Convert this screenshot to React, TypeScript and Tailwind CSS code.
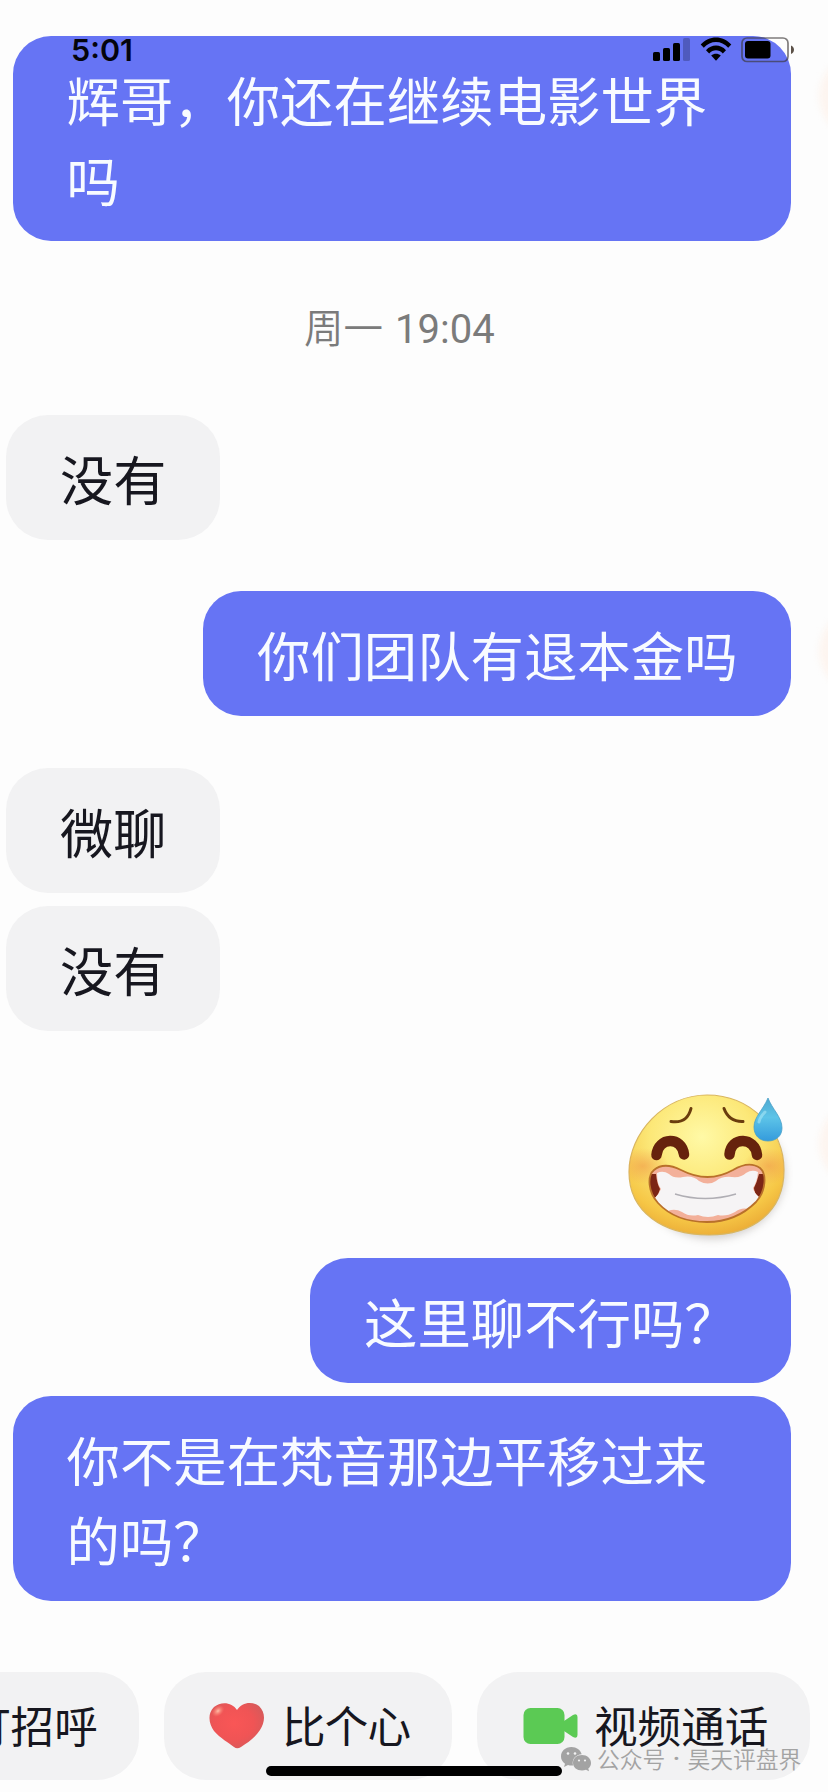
import React from "react";

const FONT = "font-['Noto_Sans_CJK_SC',sans-serif]";

function Sent({ className, children }: { className: string; children: React.ReactNode }) {
  return (
    <div className={`ml-auto mr-[37px] rounded-[38px] bg-[#6674f4] pl-[54px] pt-[22.5px] pb-[22px] text-[53.4px] leading-[80px] font-normal whitespace-nowrap text-[#f8fbff] ${className}`}>
      {children}
    </div>
  );
}

function Received({ className, children }: { className: string; children: React.ReactNode }) {
  return (
    <div className={`ml-[6px] w-[214px] rounded-[42px] bg-[#f2f2f3] pl-[54px] pt-[23px] pb-[22px] text-[53.2px] leading-[80px] font-normal whitespace-nowrap text-[#17171f] ${className}`}>
      {children}
    </div>
  );
}

function AvatarEdge({ className }: { className: string }) {
  return <div className={`absolute left-[819px] h-[84px] w-[84px] rounded-full bg-[#fdf5f0] blur-[3px] ${className}`} />;
}

function SignalIcon() {
  return (
    <svg width="38" height="25" viewBox="0 0 38 25">
      <rect x="0" y="15" width="7" height="9" rx="1.6" />
      <rect x="10" y="11" width="7" height="13" rx="1.6" />
      <rect x="20" y="6" width="7" height="18" rx="1.6" />
      <rect x="30" y="1" width="7" height="23" rx="1.6" opacity=".22" />
    </svg>
  );
}

function WifiIcon() {
  return (
    <svg width="32" height="24" viewBox="0 0 32 24">
      <path d="M.7 7.6C9-2 23-2 31.3 7.6L28.2 10.8C21.5 3.2 10.5 3.2 3.8 10.8Z" />
      <path d="M6 13.2C11.6 7 20.4 7 26 13.2L22.8 16.4C19 12.2 13 12.2 9.2 16.4Z" />
      <path d="M11.2 18.6C14 16 18 16 20.8 18.6L16 23.8Z" />
    </svg>
  );
}

function BatteryIcon() {
  return (
    <svg width="54" height="26" viewBox="0 0 54 26">
      <rect x="1" y="1" width="46" height="23.5" rx="5" fill="none" stroke="#3c3838" strokeOpacity=".65" strokeWidth="1.7" />
      <rect x="4" y="4" width="25.5" height="17.5" rx="3" />
      <path d="M50 8.500C54 10 54 15.500 50 17Z" fill="#5c5148" />
    </svg>
  );
}

const FACE = "M86 5C130 5 163 40 163 80C163 122 132 145 88 145C42 145 8 122 8 82C8 43 43 5 86 5Z";
const MOUTH = "M33 34C40 28 50 29 60 34Q87 48 112 34C122 28 132 27 139 32C146 38 145 55 135 66C121 80 106 86 86 86C66 86 49 80 37 67C27 56 26 40 33 34Z";

function GrinSweat() {
  return (
    <svg className="mt-[59px] ml-[621px] block" width="172" height="158" viewBox="0 0 172 158">
      <defs>
        <radialGradient id="face" cx=".47" cy=".3" r=".74">
          <stop offset="0" stopColor="#fff9a6" />
          <stop offset=".45" stopColor="#fce878" />
          <stop offset=".8" stopColor="#f6c746" />
          <stop offset="1" stopColor="#eaa834" />
        </radialGradient>
        <linearGradient id="drop" x1="0" y1="0" x2="0" y2="1">
          <stop offset="0" stopColor="#4fa9d0" />
          <stop offset=".45" stopColor="#5dc4e8" />
          <stop offset="1" stopColor="#349bdc" />
        </linearGradient>
        <radialGradient id="cheek">
          <stop offset="0" stopColor="#f09a4a" stopOpacity=".6" />
          <stop offset="1" stopColor="#f09a4a" stopOpacity="0" />
        </radialGradient>
        <clipPath id="head"><path d={FACE} /></clipPath>
        <clipPath id="mouth"><path d={MOUTH} /></clipPath>
        <filter id="soft" x="-20%" y="-20%" width="140%" height="140%">
          <feGaussianBlur stdDeviation="4" />
        </filter>
        <filter id="blend">
          <feGaussianBlur stdDeviation=".6" />
        </filter>
      </defs>
      <ellipse cx="91" cy="84" rx="73" ry="65" fill="#8c8480" opacity=".38" filter="url(#soft)" />
      <path d={FACE} fill="url(#face)" stroke="#d9b660" strokeWidth="1.2" />
      <g clipPath="url(#head)">
        <ellipse cx="22" cy="76" rx="26" ry="18" fill="url(#cheek)" />
        <ellipse cx="148" cy="76" rx="26" ry="18" fill="url(#cheek)" />
      </g>
      <g filter="url(#blend)">
        <path d="M50 31.500Q66 34 70 18.500M103 18.500Q108 32 122 31.500" fill="none" stroke="#6b3c11" strokeWidth="3" strokeLinecap="round" />
        <path d="M35.500 65C37 47 61 46 63 64.500M108.500 64.500C110 46 134 47 136 65" fill="none" stroke="#662408" strokeWidth="10.500" strokeLinecap="round" />
        <g transform="translate(0 46)">
          <g clipPath="url(#mouth)">
            <rect x="20" y="24" width="130" height="70" fill="#f3b09a" />
            <path d="M20 38H35Q36 48 39 53Q38 58 34 62L36 68H20ZM150 38H138Q136 46 133 52Q133 57 138 61L136 66H150Z" fill="#7b2513" />
            <path d="M36 37Q42 34 48 38Q53 43 62 41Q72 39 78 45Q87 50 95 45Q101 40 111 41Q120 42 125 37Q131 33 137 36Q136 46 132 52Q133 57 138 61Q134 69 128 73Q120 71 114 76Q105 81 97 79Q87 83 77 79Q68 81 61 76Q54 72 47 75Q39 71 34 62Q38 58 40 53Q36 48 36 37Z" fill="#f6f4f5" />
            <path d="M54 58Q84 67 115 58" fill="none" stroke="#b0aeb4" strokeWidth="1.4" />
          </g>
          <path d={MOUTH} fill="none" stroke="#b9702a" strokeWidth="1.8" />
        </g>
      </g>
      <path d="M147 8C151 19 161 27 161 38C161 46 155 51 147 51C138 51 133 45 133 37C133 27 142 20 147 8Z" fill="url(#drop)" stroke="#4aa0c8" strokeWidth=".8" />
      <path d="M138 32Q139 27 144 22" fill="none" stroke="#b5eefa" strokeWidth="3" strokeLinecap="round" opacity=".5" />
    </svg>
  );
}

function HeartIcon() {
  return (
    <svg width="56" height="48" viewBox="0 0 56 48">
      <defs>
        <radialGradient id="heart" cx=".45" cy=".45" r=".6">
          <stop offset="0" stopColor="#f95656" />
          <stop offset=".6" stopColor="#f05455" />
          <stop offset="1" stopColor="#d65a5a" />
        </radialGradient>
        <radialGradient id="shine">
          <stop offset="0" stopColor="#ffc0a8" />
          <stop offset="1" stopColor="#ff8070" stopOpacity="0" />
        </radialGradient>
      </defs>
      <path d="M28 8C23 0 12-1 5 5C-2 12 0 22 5 29C11 36 20 41 25 45Q28 47.500 32 45C38 41 46 36 51 28C56 20 57 11 50 4C43-1 33 0 28 8Z" fill="url(#heart)" />
      <ellipse cx="9" cy="9" rx="7" ry="5" transform="rotate(-40 9 9)" fill="url(#shine)" />
    </svg>
  );
}

function VideoIcon() {
  return (
    <svg width="56" height="38" viewBox="0 0 56 38" fill="#5bca54">
      <rect x=".5" y="1" width="41" height="36" rx="7" />
      <path d="M41 14L50 8Q54.500 6 54.500 10V28Q54.500 32 50 30L41 24Z" />
    </svg>
  );
}

function WeChatIcon() {
  return (
    <svg width="30" height="25" viewBox="0 0 30 25">
      <path d="M10.500 0C4 0 0 4.300 0 9.500C0 12.500 1.500 15 4 16.700L3 20L7 18Q9 18.700 12 18.500C10.500 12 15 7.500 20.700 7.300C19.500 3 15.500 0 10.500 0Z" fill="#a3a3a3" />
      <path d="M21 8C15.500 8 12 11.500 12 16C12 20.500 16 23.500 21 23.500Q23 23.500 25 22.800L28 24.300L27.300 21.500C29 20.200 30 18.300 30 16C30 11.500 26 8 21 8Z" fill="#a3a3a3" />
      <g fill="#f2f2f3">
        <circle cx="7" cy="6.500" r="1.300" />
        <circle cx="14" cy="6.500" r="1.300" />
        <circle cx="18" cy="13.500" r="1.100" />
        <circle cx="24" cy="13.500" r="1.100" />
      </g>
    </svg>
  );
}

export default function App() {
  return (
    <div className={`relative flex h-[1792px] w-[828px] flex-col overflow-hidden bg-[#fdfdfd] pt-[36px] ${FONT}`}>
      <AvatarEdge className="top-[54px]" />
      <AvatarEdge className="top-[609px]" />
      <AvatarEdge className="top-[1102px]" />

      <Sent className="h-[205px] w-[778.5px]">
        辉哥，你还在继续电影世界
        <br />吗
      </Sent>
      <div className="mt-[56px] ml-[304px] h-[58px] text-[39.5px] leading-[58px] font-[350] whitespace-nowrap text-[#7b7b7b]">
        周一<span className="ml-[12px] font-['Roboto',sans-serif] text-[40px] font-normal">19:04</span>
      </div>
      <Received className="mt-[60px] h-[125px]">没有</Received>
      <Sent className="mt-[51px] h-[125px] w-[588px]">你们团队有退本金吗</Sent>
      <Received className="mt-[52px] h-[125px]">微聊</Received>
      <Received className="mt-[12.500px] h-[125px]">没有</Received>
      <GrinSweat />
      <Sent className="mt-[10.500px] h-[125px] w-[481px]">这里聊不行吗？</Sent>
      <Sent className="mt-[13px] h-[205px] w-[778.5px]">
        你不是在梵音那边平移过来
        <br />的吗？
      </Sent>

      <div className="mt-[71px] -ml-[88px] flex h-[108px] shrink-0 gap-[25px] text-[43.6px] leading-[64px] font-normal whitespace-nowrap text-[#17171f]">
        <div className="flex w-[227px] shrink-0 items-center rounded-[42px] bg-[#f2f2f3] pb-[4px] pl-[55px]">打招呼</div>
        <div className="flex w-[288px] shrink-0 items-center gap-[17px] rounded-[42px] bg-[#f2f2f3] pl-[45px]">
          <HeartIcon />
          <span className="pb-[4px] tracking-[-0.8px]">比个心</span>
        </div>
        <div className="flex w-[333px] shrink-0 items-center gap-[15px] rounded-[42px] bg-[#f2f2f3] pl-[46px]">
          <VideoIcon />
          <span className="pb-[4px]">视频通话</span>
        </div>
      </div>

      <div className="absolute top-[36px] left-[71px] font-['Inter',sans-serif] text-[30.5px] leading-[28px] font-semibold text-[#04040c]">5:01</div>
      <div className="absolute top-[37px] left-[653px] flex items-start">
        <SignalIcon />
        <div className="ml-[9px]"><WifiIcon /></div>
        <div className="ml-[9px]"><BatteryIcon /></div>
      </div>
      <div className="absolute top-[1766px] left-[266px] h-[10px] w-[296px] rounded-full bg-black" />
      <div className="absolute top-[1742px] left-[561px] flex items-center text-[22.8px] leading-[34px] whitespace-nowrap text-[#a3a3a3]">
        <WeChatIcon />
        <div className="ml-[6px] flex font-[350]">
          <span>公众号</span>
          <span className="w-[22px] text-center font-['Roboto',sans-serif] font-bold">·</span>
          <span>昊天评盘界</span>
        </div>
      </div>
    </div>
  );
}
